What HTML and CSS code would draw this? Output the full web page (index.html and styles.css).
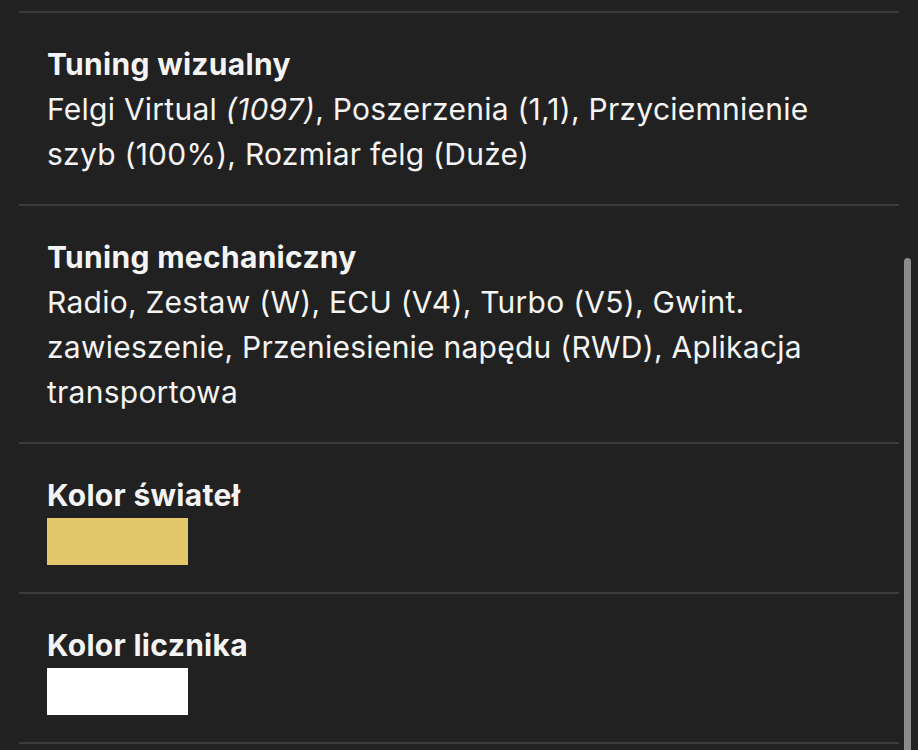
FILE: index.html
```html
<!DOCTYPE html>
<html lang="pl">
<head>
    <meta charset="UTF-8">
    <meta name="viewport" content="width=device-width, initial-scale=1.0">
    <title>Tuning</title>
    <link rel="stylesheet" href="styles.css">
</head>
<body>
    <div id="details">
        <div class="spec">
            <h3>Tuning wizualny</h3>
            <p>Felgi Virtual <em>(1097)</em>, Poszerzenia (1,1), Przyciemnienie szyb (100%), Rozmiar felg (Duże)</p>
        </div>

        <div class="spec">
            <h3>Tuning mechaniczny</h3>
            <p>Radio, Zestaw (W), ECU (V4), Turbo (V5), Gwint. zawieszenie, Przeniesienie napędu (RWD), Aplikacja transportowa</p>
        </div>

        <div class="spec">
            <h3>Kolor świateł</h3>
            <div class="swatch" style="background-color: #e3c76b;"></div>
        </div>

        <div class="spec">
            <h3>Kolor licznika</h3>
            <div class="swatch" style="background-color: #ffffff;"></div>
        </div>
    </div>

    <div class="scrollbar"></div>
</body>
</html>
```

FILE: styles.css
```css
body {
    font-family: Inter, "Noto Sans", sans-serif;
    margin: 0;
    background-color: #212121;
    color: #f4f4f4;
    overflow: hidden;
}

#details {
    margin: 11px 0 0 19px;
    width: 880px;
    border-top: 2px solid #3b3b3b;
}

.spec {
    padding: 29px 28px 27px;
    border-bottom: 2px solid #3b3b3b;
}

.spec h3 {
    margin: 0;
    font-size: 30px;
    font-weight: 700;
    line-height: 45px;
    letter-spacing: 0.3px;
}

.spec p {
    margin: 0;
    font-size: 30px;
    font-weight: 400;
    line-height: 45px;
    letter-spacing: 0.25px;
}

.swatch {
    width: 141px;
    height: 47px;
}

.scrollbar {
    position: absolute;
    top: 258px;
    left: 904px;
    width: 7px;
    height: 500px;
    border-radius: 4px;
    background-color: #8c8c8c;
}
```
